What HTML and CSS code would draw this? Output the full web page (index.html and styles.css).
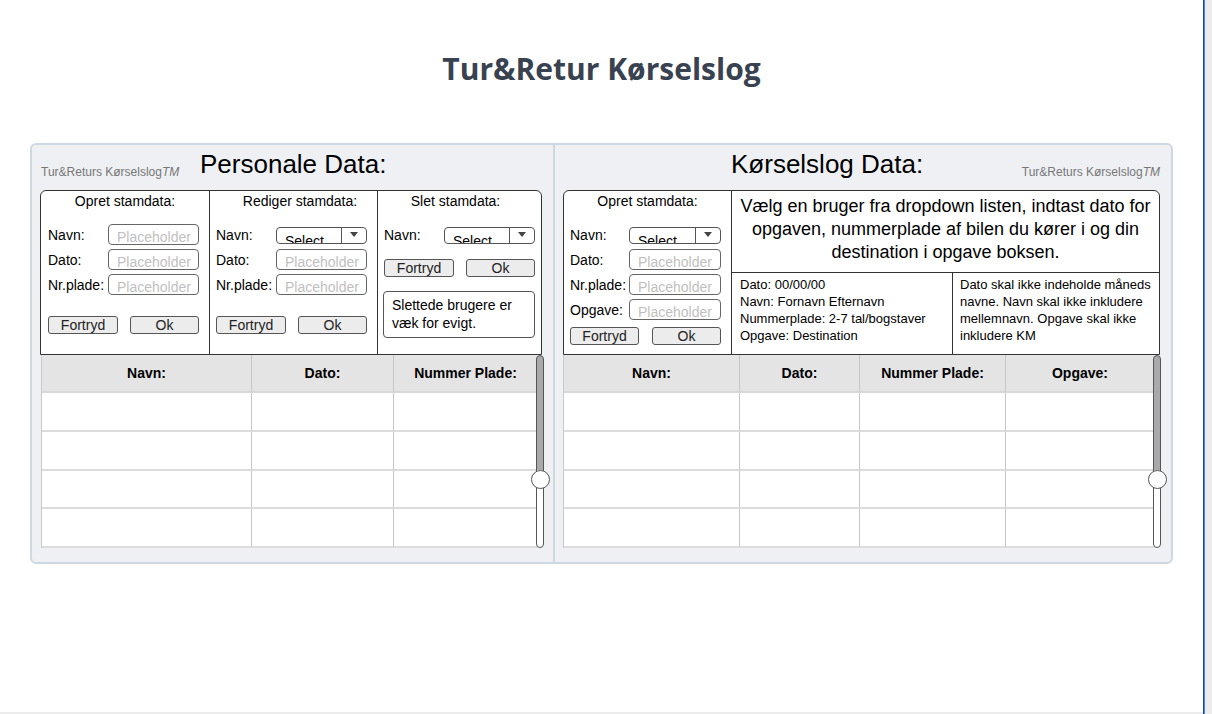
FILE: index.html
```html
<!DOCTYPE html>
<html lang="da">
<head>
<meta charset="utf-8">
<title>Tur&amp;Retur Kørselslog</title>
<link rel="stylesheet" href="styles.css">
</head>
<body>
<div class="screen">
  <main class="page">
    <h1 class="app-title">Tur&amp;Retur Kørselslog</h1>
    <div class="board">
      <section class="panel panel-left">
        <header class="panel-head">
          <span class="brand">Tur&amp;Returs Kørselslog<i>TM</i></span>
          <h2 class="panel-title">Personale Data:</h2>
        </header>
        <div class="formbox formbox-left">
          <div class="fcol">
            <div class="fcol-title">Opret stamdata:</div>
            <div class="fcol-body">
              <div class="fields">
                <span class="lbl">Navn:</span><div class="input">Placeholder</div>
                <span class="lbl">Dato:</span><div class="input">Placeholder</div>
                <span class="lbl">Nr.plade:</span><div class="input">Placeholder</div>
              </div>
              <div class="btns btns-low"><button class="btn btn-wide">Fortryd</button><button class="btn">Ok</button></div>
            </div>
          </div>
          <div class="fcol">
            <div class="fcol-title title-shift-r">Rediger stamdata:</div>
            <div class="fcol-body body-6">
              <div class="fields">
                <span class="lbl">Navn:</span><div class="select"><span class="select-text">Select</span><span class="select-arrow"><i class="tri"></i></span></div>
                <span class="lbl">Dato:</span><div class="input">Placeholder</div>
                <span class="lbl">Nr.plade:</span><div class="input">Placeholder</div>
              </div>
              <div class="btns btns-low"><button class="btn btn-wide">Fortryd</button><button class="btn">Ok</button></div>
            </div>
          </div>
          <div class="fcol fcol-last">
            <div class="fcol-title title-shift-l">Slet stamdata:</div>
            <div class="fcol-body body-6">
              <div class="fields">
                <span class="lbl">Navn:</span><div class="select"><span class="select-text">Select</span><span class="select-arrow"><i class="tri"></i></span></div>
              </div>
              <div class="btns btns-mid"><button class="btn btn-wide">Fortryd</button><button class="btn">Ok</button></div>
              <div class="note">Slettede brugere er væk for evigt.</div>
            </div>
          </div>
        </div>
        <div class="tbl-wrap tbl-wrap-left">
          <div class="tbl tbl-3">
            <div class="th">Navn:</div><div class="th">Dato:</div><div class="th th-last">Nummer Plade:</div>
            <div class="td"></div><div class="td"></div><div class="td td-last"></div>
            <div class="td"></div><div class="td"></div><div class="td td-last"></div>
            <div class="td"></div><div class="td"></div><div class="td td-last"></div>
            <div class="td"></div><div class="td"></div><div class="td td-last"></div>
          </div>
          <div class="sbar"><span class="knob"></span></div>
        </div>
      </section>

      <section class="panel panel-right">
        <header class="panel-head">
          <h2 class="panel-title title-right">Kørselslog Data:</h2>
          <span class="brand brand-right">Tur&amp;Returs Kørselslog<i>TM</i></span>
        </header>
        <div class="formbox formbox-right">
          <div class="fcol fcol-span">
            <div class="fcol-title">Opret stamdata:</div>
            <div class="fcol-body body-6">
              <div class="fields fields-r">
                <span class="lbl">Navn:</span><div class="select"><span class="select-text">Select</span><span class="select-arrow"><i class="tri"></i></span></div>
                <span class="lbl">Dato:</span><div class="input">Placeholder</div>
                <span class="lbl">Nr.plade:</span><div class="input">Placeholder</div>
                <span class="lbl">Opgave:</span><div class="input">Placeholder</div>
              </div>
              <div class="btns btns-tight"><button class="btn btn-r">Fortryd</button><button class="btn btn-r">Ok</button></div>
            </div>
          </div>
          <div class="instructions">Vælg en bruger fra dropdown listen, indtast dato for<br>opgaven, nummerplade af bilen du kører i og din<br>destination i opgave boksen.</div>
          <div class="info">
            <div class="info-cell info-left">Dato: 00/00/00<br>Navn: Fornavn Efternavn<br>Nummerplade: 2-7 tal/bogstaver<br>Opgave: Destination</div>
            <div class="info-cell info-right">Dato skal ikke indeholde måneds<br>navne. Navn skal ikke inkludere<br>mellemnavn. Opgave skal ikke<br>inkludere KM</div>
          </div>
        </div>
        <div class="tbl-wrap tbl-wrap-right">
          <div class="tbl tbl-4">
            <div class="th">Navn:</div><div class="th">Dato:</div><div class="th">Nummer Plade:</div><div class="th th-last">Opgave:</div>
            <div class="td"></div><div class="td"></div><div class="td"></div><div class="td td-last"></div>
            <div class="td"></div><div class="td"></div><div class="td"></div><div class="td td-last"></div>
            <div class="td"></div><div class="td"></div><div class="td"></div><div class="td td-last"></div>
            <div class="td"></div><div class="td"></div><div class="td"></div><div class="td td-last"></div>
          </div>
          <div class="sbar"><span class="knob"></span></div>
        </div>
      </section>
    </div>
  </main>
  <div class="vrule"></div>
  <div class="gutter"></div>
</div>
</body>
</html>
```

FILE: styles.css
```css
* { box-sizing: border-box; }

html, body {
  margin: 0;
  padding: 0;
  background: #ffffff;
}

body {
  font-family: "Liberation Sans", Arial, sans-serif;
  color: #000;
  overflow: hidden;
}

.screen {
  display: flex;
  width: 1212px;
  height: 714px;
}

.page {
  width: 1203px;
  height: 714px;
  flex: none;
  background: #ffffff;
  border-bottom: 2px solid #ececec;
}

.vrule {
  width: 2px;
  flex: none;
  background: linear-gradient(90deg, #1f3fae 0 1px, #4d86ee 1px 2px);
}

.gutter {
  flex: 1;
  background: #ececec;
}

.app-title {
  margin: 48px 0 0;
  font-family: "Open Sans", "Liberation Sans", sans-serif;
  font-weight: 700;
  font-size: 30px;
  line-height: 41px;
  text-align: center;
  color: #384250;
}

.board {
  display: flex;
  width: 1143px;
  margin: 54px auto 0;
  border: 2px solid #cfd7e1;
  border-radius: 6px;
  background: #eef0f4;
}

.panel {
  padding: 4px 11px 14px 8px;
}

.panel-left {
  width: 523px;
  flex: none;
  border-right: 2px solid #cfd7e1;
}

.panel-right {
  flex: 1;
}

.panel-head {
  display: flex;
  align-items: flex-end;
  height: 30px;
  margin-bottom: 11px;
}

.brand {
  font-size: 12px;
  line-height: 14px;
  color: #777777;
  white-space: nowrap;
}

.brand i { font-style: italic; }

.panel-left .brand {
  width: 160px;
  flex: none;
  padding-left: 1px;
}

.brand-right {
  margin-left: auto;
}

.panel-title {
  margin: 0;
  font-size: 26px;
  line-height: 30px;
  font-weight: normal;
  white-space: nowrap;
}

.title-right {
  margin-left: 168px;
}

/* form box */
.formbox {
  height: 165px;
  border: 1px solid #333333;
  border-radius: 6px 6px 0 0;
  background: #ffffff;
  display: grid;
}

.formbox-left {
  grid-template-columns: 169px 168px 1fr;
}

.formbox-right {
  grid-template-columns: 168px 1fr;
  grid-template-rows: 82px 1fr;
}

.fcol {
  padding-top: 2px;
  border-right: 1px solid #333333;
}

.fcol-last { border-right: none; }

.fcol-span { grid-row: 1 / span 2; }

.fcol-title {
  font-size: 14px;
  line-height: 17px;
  text-align: center;
  margin-bottom: 14px;
  white-space: nowrap;
}

.title-shift-r { padding-left: 13px; }
.title-shift-l { padding-right: 8px; }

.fcol-body { padding-left: 7px; }
.body-6 { padding-left: 6px; }

.fields {
  display: grid;
  grid-template-columns: 60px 91px;
  grid-auto-rows: 21px;
  row-gap: 4px;
}

.fields-r {
  grid-template-columns: 59px 92px;
}

.lbl {
  align-self: center;
  font-size: 14px;
  line-height: 16px;
  white-space: nowrap;
}

.input {
  border: 1px solid #666666;
  border-radius: 4px;
  padding: 5px 0 0 8px;
  font-size: 14px;
  line-height: 14px;
  color: #bfbfbf;
  white-space: nowrap;
  overflow: hidden;
  background: #ffffff;
}

.select {
  align-self: start;
  margin-top: 3px;
  height: 17px;
  display: flex;
  border: 1px solid #555555;
  border-radius: 4px;
  overflow: hidden;
  background: #ffffff;
}

.select-text {
  flex: 1;
  padding: 5px 0 0 8px;
  font-size: 14px;
  line-height: 16px;
  white-space: nowrap;
  overflow: hidden;
}

.select-arrow {
  width: 25px;
  flex: none;
  border-left: 1px solid #555555;
  display: flex;
  align-items: center;
  justify-content: center;
  padding-bottom: 2px;
}

.tri {
  width: 0;
  height: 0;
  border-left: 4px solid transparent;
  border-right: 4px solid transparent;
  border-top: 5px solid #444444;
}

.btns {
  display: flex;
  gap: 12px;
}

.btns-low { margin-top: 21px; }
.btns-mid { margin-top: 14px; }
.btns-tight { margin-top: 7px; gap: 13px; }

.btn {
  width: 69px;
  height: 18px;
  padding: 0;
  border: 1px solid #555555;
  border-radius: 3px;
  background: #ececec;
  font-family: "Liberation Sans", Arial, sans-serif;
  font-size: 14px;
  line-height: 16px;
  color: #222222;
  text-align: center;
}

.btn-wide { width: 70px; }
.btn-r { width: 69px; }

.note {
  width: 152px;
  height: 47px;
  margin: 14px 0 0 -1px;
  padding: 5px 0 0 8px;
  border: 1px solid #555555;
  border-radius: 4px;
  font-size: 14px;
  line-height: 17.5px;
}

.instructions {
  border-bottom: 1px solid #333333;
  padding-top: 4px;
  font-size: 18px;
  line-height: 23px;
  text-align: center;
  white-space: nowrap;
}

.info {
  display: grid;
  grid-template-columns: 221px 1fr;
}

.info-cell {
  padding-top: 3px;
  font-size: 13px;
  line-height: 17px;
  white-space: nowrap;
}

.info-left {
  padding-left: 8px;
  border-right: 1px solid #333333;
}

.info-right {
  padding-left: 7px;
}

/* tables */
.tbl-wrap {
  display: flex;
  height: 193px;
}

.tbl-wrap-left { margin: 0 -2px 0 1px; }
.tbl-wrap-right { margin: 0 -1px 0 0; }

.tbl {
  flex: 1;
  display: grid;
  grid-template-rows: 38px 39px 39px 38px 39px;
  border-left: 1px solid #c9c9c9;
  background: #ffffff;
}

.tbl-3 { grid-template-columns: 210px 142px 1fr; }
.tbl-4 { grid-template-columns: 176px 120px 146px 1fr; }

.th {
  background: #e4e4e4;
  border-right: 1px solid #c6c6c6;
  border-bottom: 2px solid #d8d8d8;
  font-size: 14px;
  font-weight: 700;
  line-height: 36px;
  text-align: center;
  white-space: nowrap;
}

.td {
  border-right: 1px solid #c6c6c6;
  border-bottom: 2px solid #dcdcdc;
}

.th-last, .td-last { border-right: none; }

.sbar {
  position: relative;
  width: 8px;
  flex: none;
  margin-left: -1px;
  border: 1px solid #555555;
  border-radius: 4px;
  background: linear-gradient(#a9a9a9 0 114px, #ffffff 114px);
}

.knob {
  position: absolute;
  left: 50%;
  top: 114px;
  width: 19px;
  height: 19px;
  margin-left: -9.5px;
  border: 1px solid #555555;
  border-radius: 50%;
  background: #ffffff;
}
```
